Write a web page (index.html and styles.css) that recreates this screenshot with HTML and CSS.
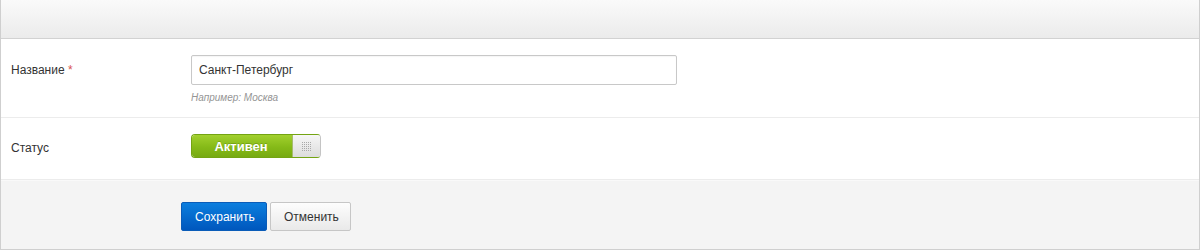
FILE: index.html
```html
<!DOCTYPE html>
<html lang="ru">
<head>
<meta charset="utf-8">
<title>Форма</title>
<link rel="stylesheet" href="styles.css">
</head>
<body>
<div class="panel">
  <div class="panel-head"></div>
  <div class="row row-name">
    <label class="label">Название <span class="req">*</span></label>
    <div class="control">
      <input class="input" type="text" value="Санкт-Петербург">
      <div class="hint">Например: Москва</div>
    </div>
  </div>
  <div class="row row-status">
    <label class="label">Статус</label>
    <div class="control">
      <div class="toggle">
        <span class="toggle-on">Активен</span>
        <span class="toggle-handle">
          <svg class="grip" width="9" height="9" viewBox="0 0 9 9" aria-hidden="true">
            <g fill="#a8a8a8">
              <rect x="0" y="0" width="1" height="1"/><rect x="2" y="0" width="1" height="1"/><rect x="4" y="0" width="1" height="1"/><rect x="6" y="0" width="1" height="1"/><rect x="8" y="0" width="1" height="1"/>
              <rect x="0" y="2" width="1" height="1"/><rect x="2" y="2" width="1" height="1"/><rect x="4" y="2" width="1" height="1"/><rect x="6" y="2" width="1" height="1"/><rect x="8" y="2" width="1" height="1"/>
              <rect x="0" y="4" width="1" height="1"/><rect x="2" y="4" width="1" height="1"/><rect x="4" y="4" width="1" height="1"/><rect x="6" y="4" width="1" height="1"/><rect x="8" y="4" width="1" height="1"/>
              <rect x="0" y="6" width="1" height="1"/><rect x="2" y="6" width="1" height="1"/><rect x="4" y="6" width="1" height="1"/><rect x="6" y="6" width="1" height="1"/><rect x="8" y="6" width="1" height="1"/>
              <rect x="0" y="8" width="1" height="1"/><rect x="2" y="8" width="1" height="1"/><rect x="4" y="8" width="1" height="1"/><rect x="6" y="8" width="1" height="1"/><rect x="8" y="8" width="1" height="1"/>
            </g>
          </svg>
        </span>
      </div>
    </div>
  </div>
  <div class="footer">
    <button class="btn btn-primary" type="button">Сохранить</button>
    <button class="btn btn-default" type="button">Отменить</button>
  </div>
</div>
</body>
</html>
```
FILE: styles.css
```css
html, body {
  margin: 0;
  padding: 0;
  background: #fff;
}
body {
  font-family: "Liberation Sans", Arial, sans-serif;
  font-size: 12px;
  color: #333;
}
.panel {
  width: 1198px;
  border: 1px solid #cfcfcf;
  border-top: none;
}
.panel-head {
  height: 38px;
  background: linear-gradient(#fafafa, #ebebeb);
  border-bottom: 1px solid #d2d2d2;
}
.row {
  display: grid;
  grid-template-columns: 180px 1fr;
  padding-left: 10px;
  border-bottom: 1px solid #ececec;
  align-items: start;
  box-sizing: border-box;
}
.row-name {
  padding-top: 16px;
  height: 79px;
}
.row-name .label {
  padding-top: 7px;
}
.row-status {
  height: 62px;
  padding-top: 16px;
}
.row-status .label {
  padding-top: 6px;
}
.label {
  font-size: 12px;
  color: #333;
  line-height: 16px;
}
.req {
  color: #d9534f;
}
.input {
  display: block;
  width: 486px;
  height: 30px;
  box-sizing: border-box;
  border: 1px solid #c8c8c8;
  border-radius: 2px;
  padding: 0 7px;
  font-family: "Liberation Sans", Arial, sans-serif;
  font-size: 12px;
  color: #333;
  background: #fff;
  box-shadow: inset 0 1px 1px rgba(0,0,0,0.04);
}
.hint {
  margin-top: 6px;
  font-size: 10px;
  font-style: italic;
  color: #959595;
  line-height: 13px;
}
.toggle {
  display: flex;
  width: 130px;
  height: 24px;
  box-sizing: border-box;
  border-radius: 4px;
  overflow: hidden;
  border: 1px solid #74a413;
  border-right-color: #c4c4c4;
}
.toggle-on {
  flex: 1;
  display: flex;
  align-items: center;
  justify-content: center;
  background: linear-gradient(#a2d02e, #85ba18 55%, #77aa12);
  color: #fff;
  font-weight: bold;
  font-size: 13px;
  text-shadow: 0 -1px 0 rgba(60,90,0,0.3);
  padding-right: 2px;
}
.toggle-handle {
  width: 27px;
  display: flex;
  align-items: center;
  justify-content: center;
  background: linear-gradient(#f6f6f6, #dcdcdc);
  border-left: 1px solid #a6bb70;
}
.grip {
  display: block;
}
.footer {
  height: 69px;
  box-sizing: border-box;
  background: #f4f4f4;
  border-top: 1px solid #f9f9f9;
  padding: 21px 0 0 180px;
  display: flex;
  align-items: flex-start;
  gap: 3px;
}
.btn {
  height: 29px;
  box-sizing: border-box;
  border-radius: 2px;
  font-family: "Liberation Sans", Arial, sans-serif;
  font-size: 12px;
  padding: 0 13px;
  cursor: pointer;
}
.btn-primary {
  width: 86px;
  color: #fff;
  background: linear-gradient(#0b7ede, #0057bd);
  border: 1px solid #0a5cb8;
}
.btn-default {
  width: 81px;
  color: #333;
  background: linear-gradient(#fdfdfd, #e9e9e9);
  border: 1px solid #c6c6c6;
}
```
